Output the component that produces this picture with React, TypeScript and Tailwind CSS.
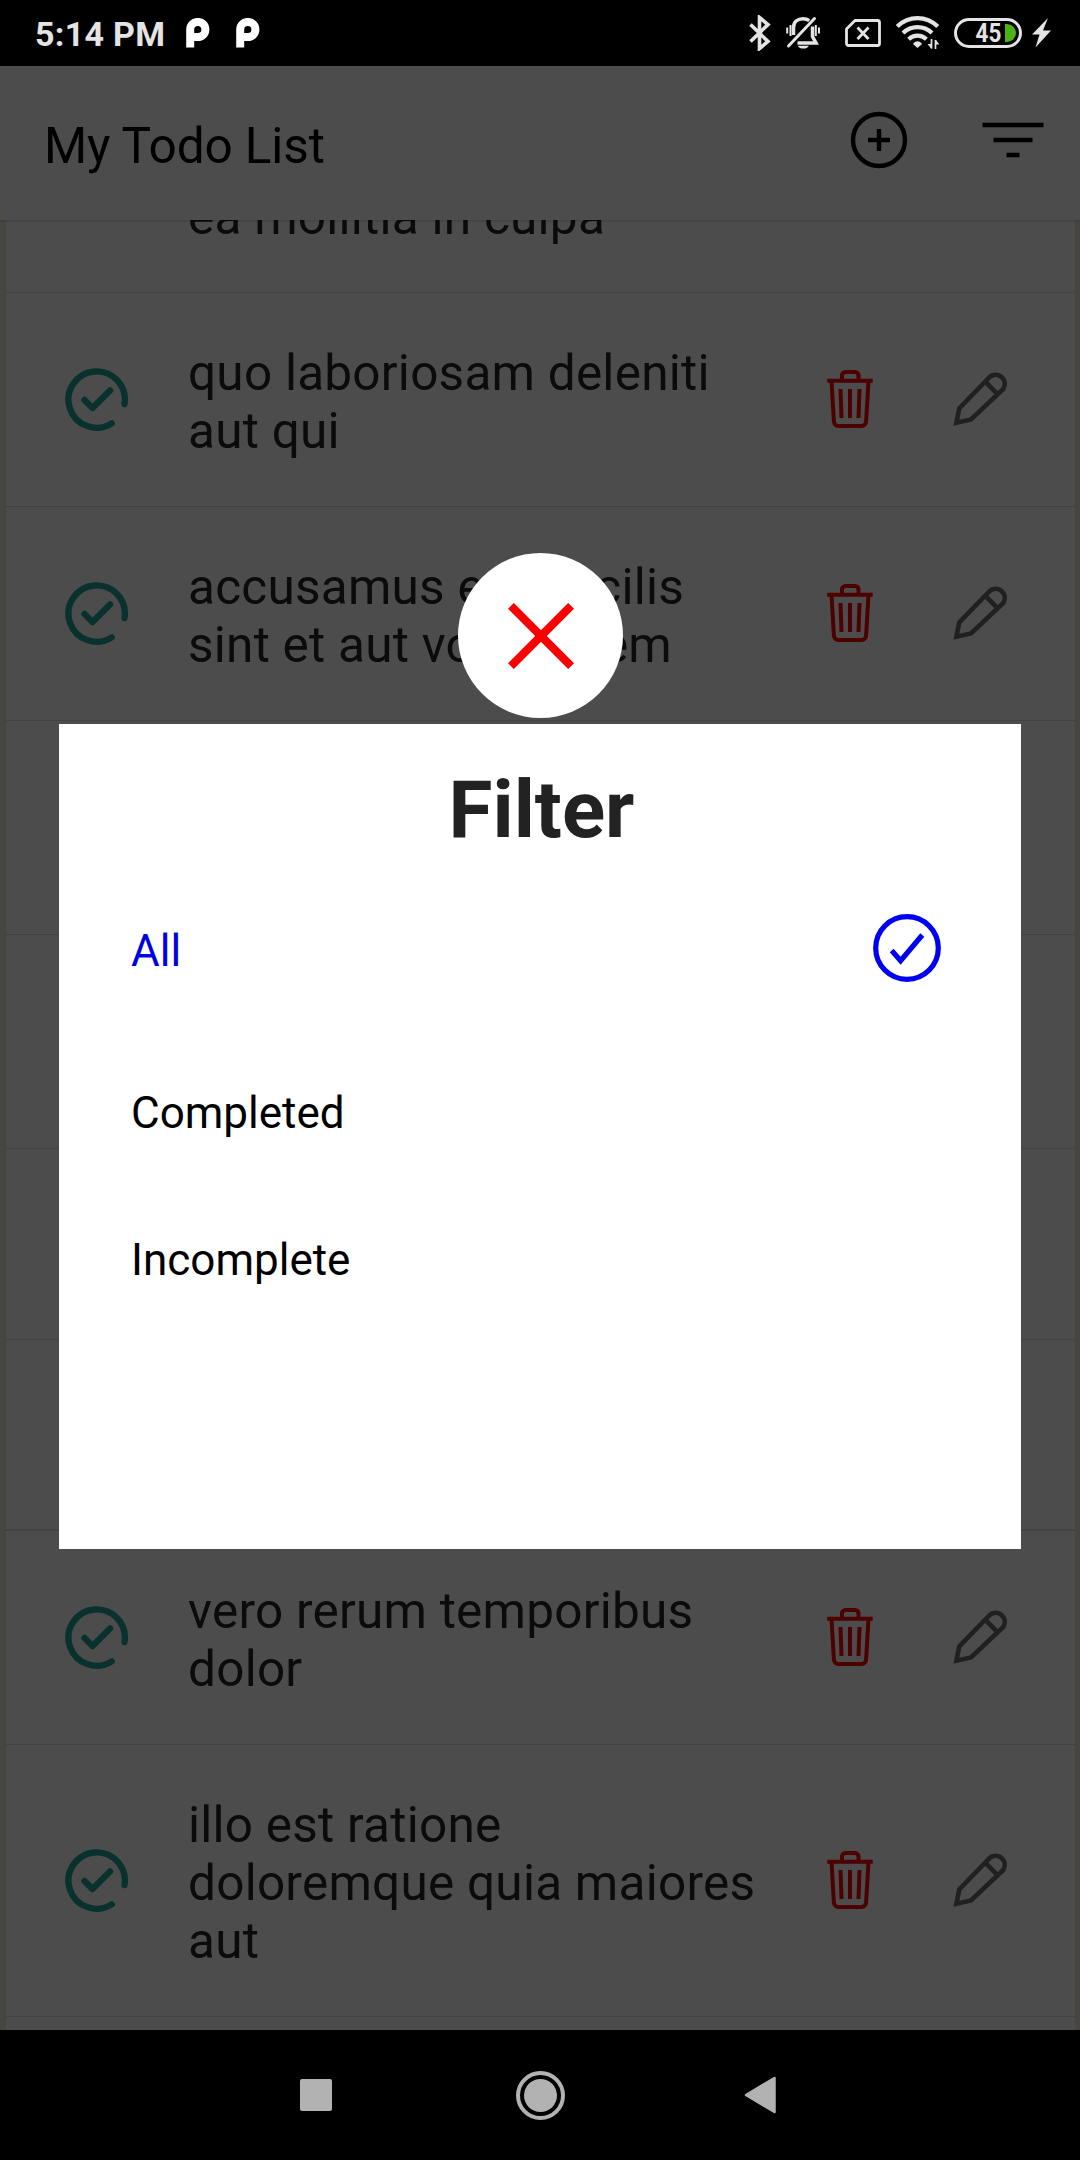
import React from "react";

type Todo = { lines: string[]; height: string };

const TODOS: Todo[] = [
  { lines: ["ea mollitia in culpa"], height: "h-[73px] border-b" },
  { lines: ["quo laboriosam deleniti", "aut qui"], height: "h-[214px] border-b" },
  { lines: ["accusamus eos facilis", "sint et aut voluptatem"], height: "h-[214px] border-b" },
  { lines: [], height: "h-[214px] border-b" },
  { lines: [], height: "h-[214px] border-b" },
  { lines: [], height: "h-[191px] border-b" },
  { lines: [], height: "h-[191px] border-b-2" },
  { lines: ["vero rerum temporibus", "dolor"], height: "h-[214px] border-b" },
  { lines: ["illo est ratione", "doloremque quia maiores", "aut"], height: "h-[272px] border-b" },
];

function ParkIcon() {
  return (
    <svg width="24" height="30" viewBox="0 0 24 30" fill="none">
      <path d="M4.2 29.5V11.5a7.6 7.6 0 1 1 7.6 7.6H8" stroke="#fff" strokeWidth="8" />
    </svg>
  );
}

function StatusBar() {
  return (
    <div className="flex h-[66px] items-center bg-black pl-[35px] text-[#e4e4e4]">
      <span className="w-[151px] whitespace-nowrap text-[34px] font-bold leading-[40px] tracking-[0.3px] pt-px">5:14 PM</span>
      <span className="flex gap-[26px]">
        <ParkIcon />
        <ParkIcon />
      </span>
      <svg className="ml-auto mr-[15px]" width="22" height="36" viewBox="0 0 22 36" fill="none" stroke="#e4e4e4" strokeWidth="3.6">
        <path d="M1.5 9.5 19 26.5 10.500 33.500V2.500l8.500 7L1.500 26.500" />
      </svg>
      <svg className="mr-[25px]" width="34" height="34" viewBox="0 0 34 34" fill="none" stroke="#e4e4e4">
        <path d="M28.500 2.500 2.500 30" strokeWidth="3" strokeLinecap="round" />
        <path d="M7.500 19V11.500C7.500 5.500 12 2.700 17 2.700c2.500 0 4.500.7 6.300 2M26.500 10.500V20.500l3.500 6.500H11.500" strokeWidth="3.500" />
        <path d="M1.200 11.500v6M4.500 9v11M29.800 9v11M33 11.500v6" strokeWidth="2" />
        <path d="M11.800 29.700h11c-1.500 3.800-9.500 3.800-11 0Z" fill="#e4e4e4" stroke="none" />
      </svg>
      <svg className="mr-[15px]" width="36" height="28" viewBox="0 0 36 28" fill="none" stroke="#e4e4e4" strokeWidth="2.800">
        <path d="M10 1.500H32.500a2 2 0 0 1 2 2V24.500a2 2 0 0 1-2 2H3.500a2 2 0 0 1-2-2V10Z" strokeLinejoin="round" />
        <path d="M12.500 8.500l11 11.500M23.500 8.500l-11 11.500" />
      </svg>
      <svg className="mr-[15px]" width="43" height="34" viewBox="0 0 43 34" fill="none" stroke="#e4e4e4" strokeWidth="4.200">
        <path d="M1.300 10.500C12.500-.7 30.500-.7 41.700 10.500" />
        <path d="M7 17c8.300-7.800 20.700-7.800 29 0" />
        <path d="M12.600 23.300c5.300-4.800 12.500-4.800 17.800 0" />
        <path d="M17 28c2.400-3.600 6.600-3.600 9 0l-4.500 4Z" fill="#e4e4e4" stroke="none" />
        <path d="M35.500 23v9.500M39.500 24v9" strokeWidth="1.700" />
        <path d="M35.500 33l-4-5h4ZM39.500 23.500l4 5h-4Z" fill="#e4e4e4" stroke="none" />
      </svg>
      <span className="flex h-[30px] w-[68px] items-center justify-end rounded-full border-[3px] border-[#e4e4e4] pr-[3px]">
        <span className="mr-[4px] origin-right scale-x-[0.88] text-[25.5px] font-bold leading-[24px]">45</span>
        <span className="h-[18px] w-[11px] rounded-r-full bg-[#4db314]" />
      </span>
      <svg className="ml-[10px] mr-[29px]" width="19" height="30" viewBox="0 0 19 30">
        <path d="M16 0 0 16.500h7.500L3.500 29.500 19 12.500h-8Z" fill="#e4e4e4" />
      </svg>
    </div>
  );
}

function Header() {
  return (
    <header className="relative flex h-[154px] items-center bg-white pl-[44px] pr-[36px] shadow-[0_1px_2px_rgba(0,0,0,0.16)]">
      <h1 className="flex-1 pt-[6px] text-[49.5px] leading-[58px] tracking-[-0.12px] text-black">My Todo List</h1>
      <svg className="mb-[6px] mr-[74px]" width="58" height="58" viewBox="0 0 58 58" fill="none" stroke="#000" strokeWidth="4.400">
        <circle cx="29" cy="29" r="26" />
        <path d="M18 29h22M29 18v22" />
      </svg>
      <svg className="mb-[6px]" width="62" height="36" viewBox="0 0 62 36" stroke="#000" strokeWidth="4.500">
        <path d="M.5 3h61M11.500 18h39M24.500 33h13" />
      </svg>
    </header>
  );
}

function DoneIcon() {
  return (
    <svg width="64" height="64" viewBox="0 0 64 64" fill="none" stroke="#1fa596" strokeWidth="6.400" strokeLinecap="round" strokeLinejoin="round">
      <path d="M59.500 36A28.200 28.200 0 1 0 46.700 55.400" />
      <path d="M19.500 32l8 8L45 22.500" />
    </svg>
  );
}

function TrashIcon() {
  return (
    <svg className="mb-px shrink-0" width="46" height="58" viewBox="0 0 46 58" fill="none" stroke="#f00" strokeWidth="4">
      <path d="M15 10V5.500a3.500 3.500 0 0 1 3.500-3.500H28a3.500 3.500 0 0 1 3.500 3.500V10M.3 10.800h45.400M4.500 11l2.400 40.500a4.500 4.500 0 0 0 4.500 4.400h23.200a4.500 4.500 0 0 0 4.500-4.400L41.500 11M13.500 19l1 29M23 19v29M32.500 19l-1 29" />
    </svg>
  );
}

function PencilIcon() {
  return (
    <svg className="mb-px shrink-0" width="55" height="56" viewBox="0 0 55 56" fill="none" stroke="#6b6b6b" strokeWidth="4.600">
      <path d="M3.400 51.700 6.300 37.300 37 5.700A9.200 9.200 0 0 1 50.300 18L18 48.500ZM33 11.300l10.700 11" />
    </svg>
  );
}

function TodoRow({ todo, clipped }: { todo: Todo; clipped: boolean }) {
  return (
    <li className={`flex shrink-0 border-[#dedede] ${todo.height} ${clipped ? "items-end pb-[46px]" : "items-center"}`}>
      {todo.lines.length > 0 && (
        <>
          <span className="ml-[59px] w-[123px]">{!clipped && <DoneIcon />}</span>
          <p className={`w-[639px] whitespace-nowrap text-[49.5px] leading-[58px] tracking-[0.24px] text-[#252525] ${clipped ? "" : "pt-[5px]"}`}>
            {todo.lines.map((line) => (
              <span key={line} className="block">{line}</span>
            ))}
          </p>
          {!clipped && (
            <>
              <TrashIcon />
              <span className="ml-[80px]"><PencilIcon /></span>
            </>
          )}
        </>
      )}
    </li>
  );
}

function FilterModal() {
  return (
    <div className="absolute inset-0 flex flex-col items-center bg-black/70 pt-[487px]">
      <button className="ml-px flex size-[165px] shrink-0 items-center justify-center rounded-full bg-white">
        <svg width="66" height="66" viewBox="0 0 66 66" stroke="#fa0000" strokeWidth="8.300">
          <path d="M2.900 2.900l60.200 60.200M63.100 2.900 2.900 63.100" />
        </svg>
      </button>
      <section className="mt-[6px] flex h-[825px] w-[962px] shrink-0 flex-col bg-white pl-[72px] pr-[80px] pt-[39px] text-[44px] leading-[52px] text-black">
        <h2 className="-ml-[72px] -mr-[80px] pl-[3px] text-center text-[80px] font-bold leading-[94px] text-[#222]">Filter</h2>
        <div className="mt-[57px] flex h-[68px] items-center justify-between text-[#0000e4]">
          <span className="pt-[6px]">All</span>
          <svg width="68" height="68" viewBox="0 0 68 68" fill="none" stroke="#0000f2" strokeWidth="5.200">
            <circle cx="34" cy="34" r="31.300" />
            <path d="M18.700 36.500l8.900 10.200L49.300 21" />
          </svg>
        </div>
        <span className="mt-[105px]">Completed</span>
        <span className="mt-[95px]">Incomplete</span>
      </section>
    </div>
  );
}

function NavBar() {
  return (
    <nav className="flex h-[130px] items-center bg-black pl-[300px]">
      <span className="size-[32px] rounded-[2px] bg-[#b2b2b2]" />
      <span className="ml-[184px] flex size-[49px] items-center justify-center rounded-full border-[4px] border-[#b2b2b2]">
        <span className="size-[33px] rounded-full bg-[#b2b2b2]" />
      </span>
      <svg className="ml-[179px]" width="32" height="38" viewBox="0 0 32 38">
        <path d="M30.500 2v34L2 19Z" fill="#b2b2b2" stroke="#b2b2b2" strokeWidth="2.500" strokeLinejoin="round" />
      </svg>
    </nav>
  );
}

export default function App() {
  return (
    <div className="flex h-[2160px] w-[1080px] flex-col overflow-hidden bg-black font-['Roboto',sans-serif]">
      <StatusBar />
      <main className="relative flex h-[1964px] flex-col overflow-hidden bg-[#ede7d6]">
        <Header />
        <ul className="ml-[6px] mr-[5px] flex min-h-0 flex-1 flex-col overflow-hidden bg-white">
          {TODOS.map((todo, i) => (
            <TodoRow key={i} todo={todo} clipped={i === 0} />
          ))}
        </ul>
        <FilterModal />
      </main>
      <NavBar />
    </div>
  );
}
